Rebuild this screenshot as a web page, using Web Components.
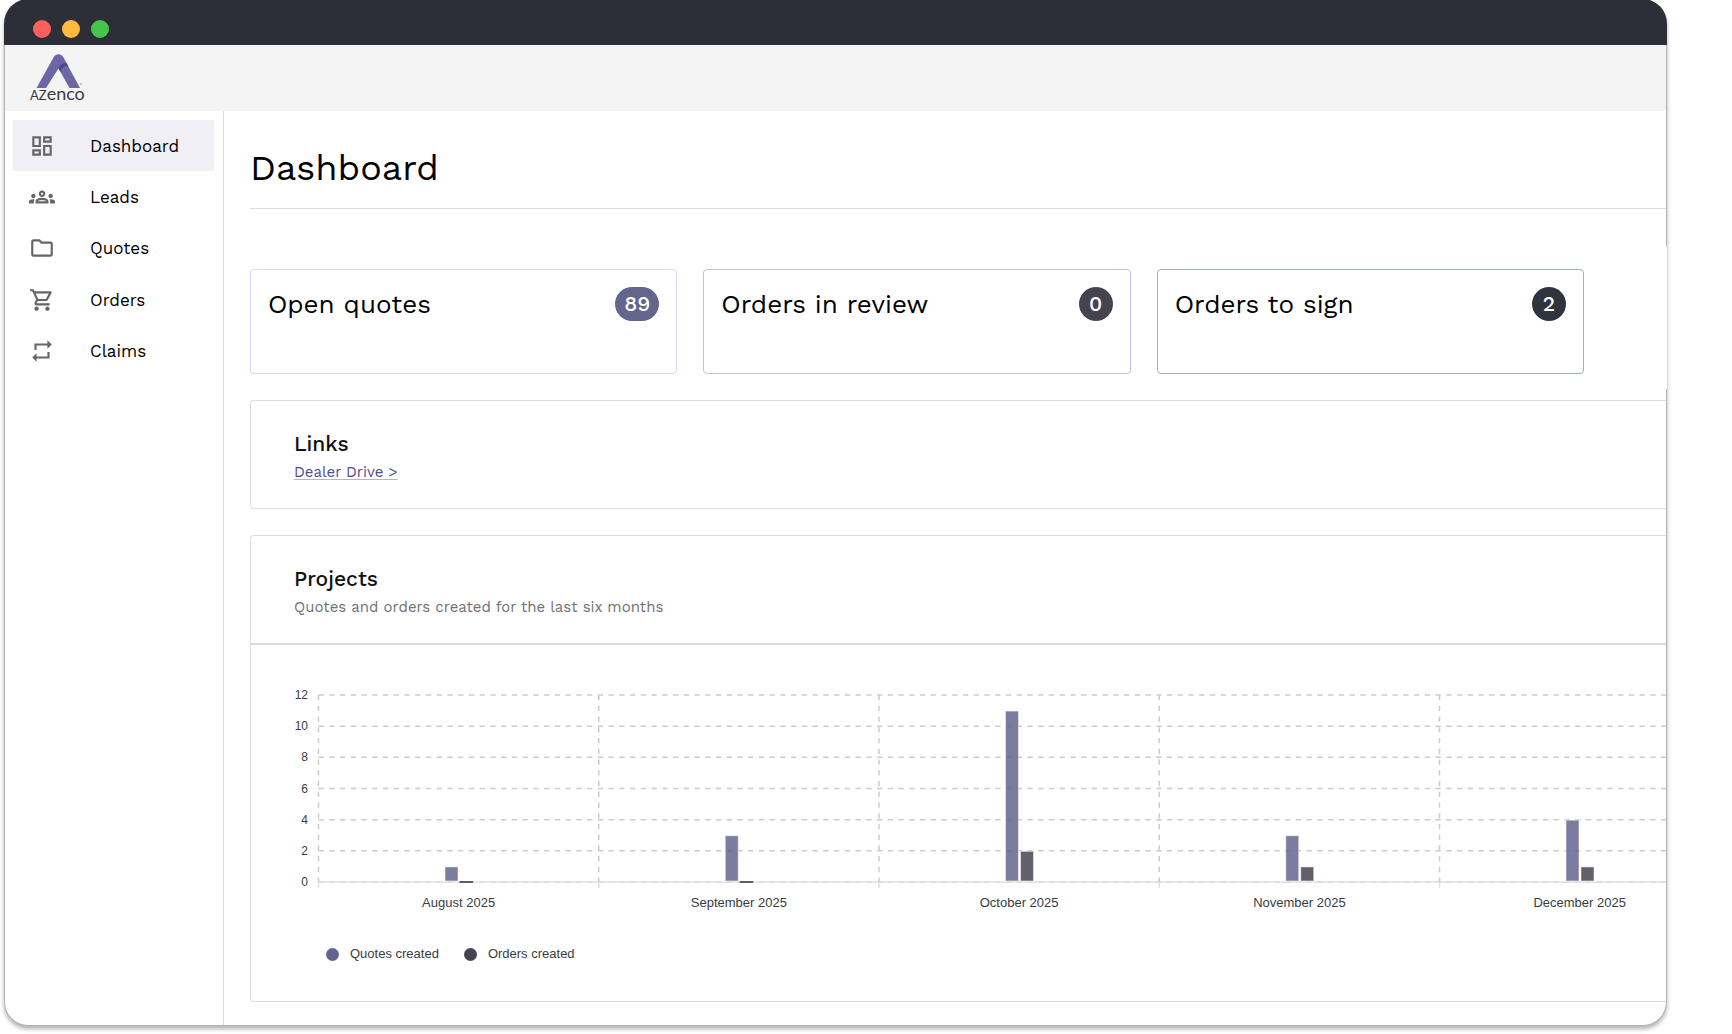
<!DOCTYPE html>
<html lang="en">
<head>
<meta charset="utf-8">
<title>Dashboard</title>
<style>
    body {
        margin: 0;
        background: #fff;
        font-family: 'Work Sans', Inter, sans-serif;
        color: #111;
    }
</style>
</head>
<body>
<browser-frame>
    <app-header slot="header"></app-header>
    <side-nav slot="nav">
        <nav-item icon="dashboard" active>Dashboard</nav-item>
        <nav-item icon="groups">Leads</nav-item>
        <nav-item icon="folder">Quotes</nav-item>
        <nav-item icon="cart">Orders</nav-item>
        <nav-item icon="repeat">Claims</nav-item>
    </side-nav>
    <dashboard-page>
        <span slot="title">Dashboard</span>
        <stat-card slot="stats" count="89" style="--line: #d5d8fb; --badge: #64658e">Open quotes</stat-card>
        <stat-card slot="stats" count="0" style="--line: #c4bee6; --badge: #474451">Orders in review</stat-card>
        <stat-card slot="stats" count="2" style="--line: #9cb0d0; --badge: #2f343f">Orders to sign</stat-card>
        <info-panel>
            <span slot="title">Links</span>
            <a slot="sub" href="#drive">Dealer Drive &gt;</a>
        </info-panel>
        <info-panel divided>
            <span slot="title">Projects</span>
            <span slot="sub">Quotes and orders created for the last six months</span>
            <bar-chart></bar-chart>
        </info-panel>
    </dashboard-page>
</browser-frame>

<script>
const ICONS = {
    dashboard: 'M19 5v2h-4V5h4M9 5v6H5V5h4m10 8v6h-4v-6h4M9 17v2H5v-2h4M21 3h-8v6h8V3zM11 3H3v10h8V3zm10 8h-8v10h8V11zm-10 4H3v6h8v-6z',
    groups: 'M4 13c1.1 0 2-.9 2-2s-.9-2-2-2-2 .9-2 2 .9 2 2 2zm1.13 1.1C4.76 14.04 4.39 14 4 14c-.99 0-1.93.21-2.78.58C.48 14.9 0 15.62 0 16.43V18h4.5v-1.61c0-.83.23-1.61.63-2.29zM20 13c1.1 0 2-.9 2-2s-.9-2-2-2-2 .9-2 2 .9 2 2 2zm4 3.43c0-.81-.48-1.53-1.22-1.85C21.93 14.21 20.99 14 20 14c-.39 0-.76.04-1.13.1.4.68.63 1.46.63 2.29V18H24v-1.57zM16.24 13.65c-1.17-.52-2.61-.9-4.24-.9s-3.07.39-4.24.9C6.68 14.13 6 15.21 6 16.39V18h12v-1.61c0-1.18-.68-2.26-1.76-2.74zM8.07 16c.09-.23.13-.39.91-.69.97-.38 1.99-.56 3.02-.56s2.05.18 3.02.56c.77.3.81.46.91.69H8.07zM12 8c.55 0 1 .45 1 1s-.45 1-1 1-1-.45-1-1 .45-1 1-1m0-2c-1.66 0-3 1.34-3 3s1.34 3 3 3 3-1.34 3-3-1.34-3-3-3z',
    folder: 'M9.17 6l2 2H20v10H4V6h5.17M10 4H4c-1.1 0-1.99.9-1.99 2L2 18c0 1.1.9 2 2 2h16c1.1 0 2-.9 2-2V8c0-1.1-.9-2-2-2h-8l-2-2z',
    cart: 'M15.55 13c.75 0 1.41-.41 1.75-1.03l3.58-6.49A.996.996 0 0 0 20.01 4H5.21l-.94-2H1v2h2l3.6 7.59-1.35 2.44C4.52 15.37 5.48 17 7 17h12v-2H7l1.1-2h7.45zM6.16 6h12.15l-2.76 5H8.53L6.16 6zM7 18c-1.1 0-1.99.9-1.99 2S5.9 22 7 22s2-.9 2-2-.9-2-2-2zm10 0c-1.1 0-1.99.9-1.99 2s.89 2 1.99 2 2-.9 2-2-.9-2-2-2z',
    repeat: 'M7 7h10v3l4-4-4-4v3H5v6h2V7zm10 10H7v-3l-4 4 4 4v-3h12v-6h-2v4z'
};

class BrowserFrame extends HTMLElement {
    connectedCallback() {
        this.attachShadow({ mode: 'open' });
        this.shadowRoot.innerHTML = `
            <style>
                :host {
                    display: block;
                    margin: 0 65px 8px 4px;
                    border: 1px solid #b4b4b4;
                    border-top: 0;
                    border-radius: 24px;
                    background: #fff;
                    overflow: clip;
                    overflow-clip-margin: 1px;
                    box-shadow: 0 3px 4px rgba(0, 0, 0, 0.3);
                }

                .bar {
                    display: flex;
                    align-items: center;
                    gap: 11px;
                    height: 33px;
                    padding: 12px 29px 0 29px;
                    margin: 0 -1px;
                    background: #2e2e38;
                }

                .dot {
                    width: 18px;
                    height: 18px;
                    border-radius: 50%;
                }

                .body {
                    display: grid;
                    grid-template-columns: auto minmax(0, 1fr);
                }
            </style>
            <div class="bar">
                <span class="dot" style="background: #fc605c"></span>
                <span class="dot" style="background: #fdbc40"></span>
                <span class="dot" style="background: #44c64c"></span>
            </div>
            <slot name="header"></slot>
            <div class="body">
                <slot name="nav"></slot>
                <slot></slot>
            </div>
        `;
    }
}

class AppHeader extends HTMLElement {
    connectedCallback() {
        this.attachShadow({ mode: 'open' });
        this.shadowRoot.innerHTML = `
            <style>
                :host {
                    display: flex;
                    height: 66px;
                    padding-left: 23px;
                    background: #f4f4f4;
                }

                svg {
                    display: block;
                }

                text {
                    font-family: Lato, sans-serif;
                    font-size: 13px;
                    fill: #3c3a41;
                }

                .low {
                    font-size: 18px;
                }
            </style>
            <svg width="62" height="66" role="img" aria-label="Azenco">
                <path d="M8.500 43 L25.500 12.500 Q27.500 9.200 30.500 9.200 Q33.500 9.200 35.500 12.500 L52 43 H41.500 L30.500 23.500 L18 43 Z" fill="#6c66a6"/>
                <path d="M30.500 23.500 Q32 18 38.500 18 L40.500 21.500 Q34.500 20 32.500 27 Z" fill="#51478a"/>
                <circle cx="53" cy="39" r="1" fill="#b9b5d6"/>
                <text x="2" y="55">AZ<tspan class="low">enco</tspan></text>
            </svg>
        `;
    }
}

class SideNav extends HTMLElement {
    connectedCallback() {
        this.attachShadow({ mode: 'open' });
        this.shadowRoot.innerHTML = `
            <style>
                :host {
                    display: block;
                    width: 201px;
                    padding: 9px 9px 0 8px;
                    border-right: 1px solid #dcdcdc;
                }

                nav {
                    display: grid;
                    grid-auto-rows: 1fr;
                    height: 257px;
                }
            </style>
            <nav><slot></slot></nav>
        `;
    }
}

class NavItem extends HTMLElement {
    connectedCallback() {
        this.attachShadow({ mode: 'open' });
        this.shadowRoot.innerHTML = `
            <style>
                :host {
                    display: grid;
                }

                a {
                    display: flex;
                    align-items: center;
                    gap: 35px;
                    padding-left: 16px;
                    font-size: 17px;
                    color: #000;
                    text-decoration: none;
                }

                :host([active]) a {
                    background: #f0eff5;
                }

                svg {
                    width: 26px;
                    height: 26px;
                    fill: #666;
                }
            </style>
            <a href="#">
                <svg viewBox="0 0 24 24" aria-hidden="true"><path d="${ICONS[this.getAttribute('icon')]}"/></svg>
                <slot></slot>
            </a>
        `;
    }
}

class DashboardPage extends HTMLElement {
    connectedCallback() {
        this.attachShadow({ mode: 'open' });
        this.shadowRoot.innerHTML = `
            <style>
                :host {
                    display: block;
                    padding: 35px 0 23px 26px;
                }

                h1 {
                    margin: 0 0 37px;
                    padding-bottom: 18px;
                    border-bottom: 1px solid #dcdcdc;
                    font-size: 36px;
                    line-height: 44px;
                    font-weight: 400;
                    color: #000;
                }

                .stats {
                    display: grid;
                    grid-template-columns: repeat(3, 1fr);
                    gap: 26px;
                    margin: 0 -1px 11px 0;
                    padding: 23px 83px 15px 0;
                    background: #fff;
                }

                .panels {
                    display: grid;
                    gap: 26px;
                }
            </style>
            <h1><slot name="title"></slot></h1>
            <div class="stats"><slot name="stats"></slot></div>
            <div class="panels"><slot></slot></div>
        `;
    }
}

class StatCard extends HTMLElement {
    connectedCallback() {
        this.attachShadow({ mode: 'open' });
        this.shadowRoot.innerHTML = `
            <style>
                :host {
                    display: flex;
                    justify-content: space-between;
                    align-items: flex-start;
                    padding: 17px 17px 52px 17px;
                    border: 1px solid var(--line);
                    border-radius: 4px;
                    font-size: 26px;
                    line-height: 34px;
                    color: #000;
                }

                .badge {
                    box-sizing: border-box;
                    min-width: 34px;
                    padding: 0 9px;
                    border-radius: 17px;
                    background: var(--badge);
                    color: #fff;
                    font-size: 21px;
                    font-weight: 500;
                    text-align: center;
                }
            </style>
            <slot></slot>
            <span class="badge">${this.getAttribute('count')}</span>
        `;
    }
}

class InfoPanel extends HTMLElement {
    connectedCallback() {
        this.attachShadow({ mode: 'open' });
        this.shadowRoot.innerHTML = `
            <style>
                :host {
                    display: block;
                    min-width: 0;
                    border: 1px solid #dedede;
                    border-right: 0;
                    border-radius: 4px 0 0 4px;
                }

                header {
                    padding: 29px 43px 24px;
                }

                :host([divided]) header {
                    border-bottom: 2px solid #dcdcdc;
                }

                h2 {
                    margin: 0 0 2px;
                    font-size: 21px;
                    line-height: 28px;
                    font-weight: 500;
                }

                .sub {
                    font-size: 15px;
                    line-height: 24px;
                    color: #717171;
                }

                ::slotted(a) {
                    color: #544c8c;
                    text-decoration: underline;
                    text-decoration-color: #b5b1d0;
                    text-underline-offset: 2px;
                }
            </style>
            <header>
                <h2><slot name="title"></slot></h2>
                <div class="sub"><slot name="sub"></slot></div>
            </header>
            <slot></slot>
        `;
    }
}

class BarChart extends HTMLElement {
    connectedCallback() {
        const months = [
            ['August 2025', 1, 0],
            ['September 2025', 3, 0],
            ['October 2025', 11, 2],
            ['November 2025', 3, 1],
            ['December 2025', 4, 1]
        ];
        const left = 67.5;
        const top = 50;
        const base = 237;
        const step = 280.25;
        const unit = (base - top) / 12;

        let svg = '';
        for (let v = 0; v <= 12; v += 2) {
            const y = base - v * unit;
            svg += `<line class="grid" x1="${left}" x2="100%" y1="${y}" y2="${y}"/>`;
            svg += `<text class="tick" x="57" y="${Math.round(y) + 4}">${v}</text>`;
        }
        svg += `<line class="axis" x1="${left}" x2="100%" y1="${base}" y2="${base}"/>`;

        months.forEach(([name, quotes, orders], i) => {
            const x = left + i * step;
            svg += `<line class="grid" x1="${x}" x2="${x}" y1="${top}" y2="${base}"/>`;
            svg += `<line class="axis" x1="${x}" x2="${x}" y1="${base}" y2="${base + 6}"/>`;
            svg += this.bar(x + 126, base, quotes * unit, '#64658e');
            svg += this.bar(x + 141, base, orders * unit, '#474451');
            svg += `<text class="month" x="${x + step / 2}" y="262">${name}</text>`;
        });

        this.attachShadow({ mode: 'open' });
        this.shadowRoot.innerHTML = `
            <style>
                :host {
                    display: block;
                    font-family: 'Liberation Sans', Arial, sans-serif;
                }

                svg {
                    display: block;
                    width: 100%;
                    height: 280px;
                }

                .grid {
                    stroke: #ccc;
                    stroke-width: 1.5;
                    stroke-dasharray: 5.37;
                }

                .axis {
                    stroke: #e0e0e0;
                    stroke-width: 1.5;
                }

                text {
                    fill: #373d3f;
                }

                .tick {
                    font-size: 12px;
                    text-anchor: end;
                }

                .month {
                    font-size: 13px;
                    text-anchor: middle;
                }

                .legend {
                    display: flex;
                    gap: 25px;
                    padding: 21px 0 39px 75px;
                    font-size: 13px;
                    line-height: 16px;
                    color: #373d3f;
                }

                .key {
                    display: flex;
                    align-items: center;
                    gap: 11px;
                }

                .key::before {
                    content: '';
                    width: 13px;
                    height: 13px;
                    border-radius: 50%;
                    background: var(--c);
                }
            </style>
            <svg role="img" aria-label="Quotes and orders by month">${svg}</svg>
            <div class="legend">
                <span class="key" style="--c: #64658e">Quotes created</span>
                <span class="key" style="--c: #474451">Orders created</span>
            </div>
        `;
    }

    // empty months still get a thin line on the axis
    bar(x, base, h, color) {
        if (!h) {
            return `<rect x="${x}" y="${base - 1}" width="13.500" height="2" fill="${color}" fill-opacity="0.85"/>`;
        }
        return `<rect x="${x + 0.5}" y="${base - h + 0.5}" width="13" height="${h - 1.5}" fill="${color}" fill-opacity="0.85" stroke="#fff" stroke-opacity="0.5"/>`;
    }
}

customElements.define('browser-frame', BrowserFrame);
customElements.define('app-header', AppHeader);
customElements.define('side-nav', SideNav);
customElements.define('nav-item', NavItem);
customElements.define('dashboard-page', DashboardPage);
customElements.define('stat-card', StatCard);
customElements.define('info-panel', InfoPanel);
customElements.define('bar-chart', BarChart);
</script>
</body>
</html>
